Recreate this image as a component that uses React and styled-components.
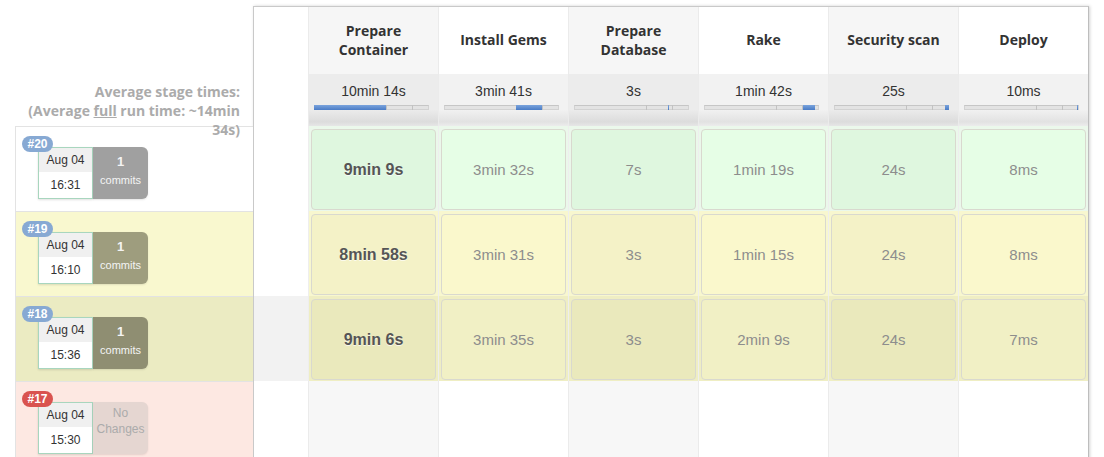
import React from 'react';
import styled, { createGlobalStyle } from 'styled-components';

const GlobalStyle = createGlobalStyle`
  html, body {
    margin: 0;
    padding: 0;
    background: #ffffff;
    overflow: hidden;
  }
  body {
    font-family: "Liberation Sans", Arial, sans-serif;
  }
`;

const STAGES = [
  { name: 'Prepare Container', avg: '10min 14s', fill: [0, 72] },
  { name: 'Install Gems', avg: '3min 41s', fill: [72, 26] },
  { name: 'Prepare Database', avg: '3s', fill: [94, 1] },
  { name: 'Rake', avg: '1min 42s', fill: [99, 12] },
  { name: 'Security scan', avg: '25s', fill: [111, 4] },
  { name: 'Deploy', avg: '10ms', fill: [113, 1] },
];

const TONES = {
  success: {
    side: '#ffffff',
    commits: '#a0a0a0',
    band: '#ebf8eb',
    odd: '#dff7df',
    even: '#e6fee6',
  },
  unstable: {
    side: '#f9f8cf',
    commits: '#9e9d7e',
    band: '#f8f7cf',
    odd: '#f4f2c7',
    even: '#faf8cc',
  },
  unstableOld: {
    side: '#ebebc2',
    commits: '#8f8e72',
    band: '#efeec3',
    odd: '#eae9bc',
    even: '#f1f0c5',
  },
  failed: {
    side: '#fde8e2',
    commits: '#e5d6d1',
    band: '#ffffff',
    odd: '#f7f7f7',
    even: '#ffffff',
  },
};

const BUILDS = [
  {
    id: 20,
    date: 'Aug 04',
    time: '16:31',
    commits: 1,
    tone: 'success',
    badge: '#87a9d3',
    times: ['9min 9s', '3min 32s', '7s', '1min 19s', '24s', '8ms'],
  },
  {
    id: 19,
    date: 'Aug 04',
    time: '16:10',
    commits: 1,
    tone: 'unstable',
    badge: '#87a9d3',
    times: ['8min 58s', '3min 31s', '3s', '1min 15s', '24s', '8ms'],
  },
  {
    id: 18,
    date: 'Aug 04',
    time: '15:36',
    commits: 1,
    tone: 'unstableOld',
    badge: '#87a9d3',
    hover: true,
    times: ['9min 6s', '3min 35s', '3s', '2min 9s', '24s', '7ms'],
  },
  {
    id: 17,
    date: 'Aug 04',
    time: '15:30',
    commits: 0,
    tone: 'failed',
    badge: '#d9534f',
    times: null,
  },
];

const Page = styled.div`
  display: flex;
  align-items: flex-start;
  padding: 6px 0 0 15px;
`;

const BuildsColumn = styled.div`
  width: 238px;
  flex-shrink: 0;
`;

const AverageLabel = styled.div`
  position: relative;
  z-index: 3;
  height: 120px;
  box-sizing: border-box;
  padding: 76px 13px 0 0;
  text-align: right;
  font-family: "Open Sans", "DejaVu Sans", sans-serif;
  font-weight: 700;
  font-size: 14px;
  line-height: 19px;
  color: #ababab;
  white-space: nowrap;

  span {
    display: block;
  }
  u {
    text-decoration: underline;
  }
`;

const SideRow = styled.div`
  position: relative;
  height: 85px;
  box-sizing: border-box;
  border-top: 1px solid #e3e3e3;
  border-left: 1px solid #e3e3e3;
  background: ${p => p.$bg};
  padding: 20px 0 0 22px;
`;

const Badge = styled.div`
  position: absolute;
  top: 9px;
  left: 6px;
  z-index: 2;
  width: 31px;
  height: 16px;
  border-radius: 8px;
  background: ${p => p.$color};
  color: #ffffff;
  font-size: 12px;
  font-weight: 700;
  line-height: 16px;
  text-align: center;
`;

const BuildCard = styled.div`
  display: flex;
  height: 52px;
`;

const DateCard = styled.div`
  width: 55px;
  box-sizing: border-box;
  border: 1px solid #a8d6be;
  box-shadow: 0 1px 2px rgba(0, 0, 0, 0.12);
  display: flex;
  flex-direction: column;
  font-size: 12px;
  color: #333333;
  text-align: center;
`;

const DateTop = styled.div`
  height: 24px;
  line-height: 24px;
  background: #f0f0f0;
`;

const DateBottom = styled.div`
  flex: 1;
  line-height: 26px;
  background: #ffffff;
`;

const CommitBox = styled.div`
  width: 55px;
  box-sizing: border-box;
  border-radius: 0 6px 6px 0;
  background: ${p => p.$bg};
  text-align: center;
  padding-top: ${p => (p.$empty ? '3px' : '5px')};
  font-size: ${p => (p.$empty ? '12px' : '11px')};
  line-height: ${p => (p.$empty ? '16px' : '19px')};
  color: ${p => (p.$empty ? '#ababab' : '#f4f4f4')};
  box-shadow: 0 1px 2px rgba(0, 0, 0, 0.1);

  b {
    display: block;
    font-size: 13px;
  }
`;

const Table = styled.div`
  flex-shrink: 0;
  border-top: 1px solid #c9c9c9;
  border-left: 1px solid #c9c9c9;
  border-right: 1px solid #bdbdbd;
  box-shadow: 1px 0 3px rgba(0, 0, 0, 0.18);
  background: #ffffff;
`;

const Row = styled.div`
  display: grid;
  grid-template-columns: 54px repeat(6, 130px);
  height: ${p => p.$height}px;
  background: ${p => p.$bg || '#ffffff'};
`;

const Blank = styled.div`
  background: ${p => p.$bg || '#ffffff'};
`;

const StageHead = styled.div`
  border-left: 1px solid #ebebeb;
  background: ${p => (p.$odd ? '#f6f6f6' : '#ffffff')};
  display: flex;
  align-items: center;
  justify-content: center;
  padding: 0 12px 2px;
  text-align: center;
  font-family: "Open Sans", "DejaVu Sans", sans-serif;
  font-weight: 700;
  font-size: 14px;
  line-height: 19px;
  color: #333333;
`;

const AvgCell = styled.div`
  border-left: 1px solid #ebebeb;
  background: ${p =>
    p.$odd
      ? 'linear-gradient(to bottom, #ececec 0%, #ececec 68%, #dcdcdc 92%, #e6e6e6 100%)'
      : 'linear-gradient(to bottom, #f2f2f2 0%, #f2f2f2 68%, #e2e2e2 92%, #ececec 100%)'};
  padding-top: 9px;
  box-sizing: border-box;
`;

const AvgText = styled.div`
  text-align: center;
  font-size: 14px;
  line-height: 16px;
  color: #333333;
`;

const Bar = styled.div`
  position: relative;
  width: 115px;
  height: 5px;
  margin: 6px 0 0 5px;
  box-sizing: border-box;
  background: #e3e3e3;
  border: 1px solid #d2d2d2;
  border-top-color: #c6c6c6;
`;

const BarTick = styled.div`
  position: absolute;
  top: -1px;
  bottom: -1px;
  width: 1px;
  background: #c2c2c2;
`;

const BarFill = styled.div`
  position: absolute;
  top: -1px;
  bottom: -1px;
  background: linear-gradient(to bottom, #7aa3dc, #4a7cc6);
`;

const StageCell = styled.div`
  border-left: 1px solid ${p => p.$line || '#ebebeb'};
  background: ${p => p.$bg};
  padding: 3px 2px 1px 2px;
  box-sizing: border-box;
`;

const TimeBox = styled.div`
  height: 100%;
  box-sizing: border-box;
  border: 1px solid #d9d9cf;
  border-radius: 4px;
  background: ${p => p.$bg};
  display: flex;
  align-items: center;
  justify-content: center;
  font-size: ${p => (p.$main ? '16px' : '15px')};
  font-weight: ${p => (p.$main ? 700 : 400)};
  color: ${p => (p.$main ? '#555555' : '#8d8d8d')};
  text-shadow: ${p => (p.$main ? '0 1px 0 rgba(255, 255, 255, 0.7)' : 'none')};
`;

function AverageBar({ fill }) {
  return (
    <Bar>
      <BarTick style={{ left: 71 }} />
      <BarTick style={{ left: 97 }} />
      <BarFill style={{ left: fill[0] - 1, width: fill[1] }} />
    </Bar>
  );
}

function SideBuild({ build }) {
  const tone = TONES[build.tone];
  const empty = build.commits === 0;
  return (
    <SideRow $bg={tone.side}>
      <Badge $color={build.badge}>#{build.id}</Badge>
      <BuildCard>
        <DateCard>
          <DateTop>{build.date}</DateTop>
          <DateBottom>{build.time}</DateBottom>
        </DateCard>
        <CommitBox $bg={tone.commits} $empty={empty}>
          {empty ? (
            <>
              No
              <br />
              Changes
            </>
          ) : (
            <>
              <b>{build.commits}</b>
              commits
            </>
          )}
        </CommitBox>
      </BuildCard>
    </SideRow>
  );
}

function BuildRow({ build }) {
  const tone = TONES[build.tone];
  if (!build.times) {
    return (
      <Row $height={85}>
        <Blank />
        {STAGES.map((s, i) => (
          <StageCell key={s.name} $bg={i % 2 === 0 ? tone.odd : tone.even} />
        ))}
      </Row>
    );
  }
  return (
    <Row $height={85} $bg={tone.band}>
      <Blank $bg={build.hover ? '#f2f2f2' : '#ffffff'} />
      {build.times.map((t, i) => (
        <StageCell key={i} $bg={tone.band} $line="#eeeeee">
          <TimeBox $bg={i % 2 === 0 ? tone.odd : tone.even} $main={i === 0}>
            {t}
          </TimeBox>
        </StageCell>
      ))}
    </Row>
  );
}

export default function App() {
  return (
    <>
      <GlobalStyle />
      <Page>
        <BuildsColumn>
          <AverageLabel>
            <span>Average stage times:</span>
            <span>
              (Average <u>full</u> run time: ~14min
            </span>
            <span>34s)</span>
          </AverageLabel>
          {BUILDS.map(b => (
            <SideBuild key={b.id} build={b} />
          ))}
        </BuildsColumn>
        <Table>
          <Row $height={67}>
            <Blank />
            {STAGES.map((s, i) => (
              <StageHead key={s.name} $odd={i % 2 === 0}>
                {s.name}
              </StageHead>
            ))}
          </Row>
          <Row $height={52}>
            <Blank />
            {STAGES.map((s, i) => (
              <AvgCell key={s.name} $odd={i % 2 === 0}>
                <AvgText>{s.avg}</AvgText>
                <AverageBar fill={s.fill} />
              </AvgCell>
            ))}
          </Row>
          {BUILDS.map(b => (
            <BuildRow key={b.id} build={b} />
          ))}
        </Table>
      </Page>
    </>
  );
}
